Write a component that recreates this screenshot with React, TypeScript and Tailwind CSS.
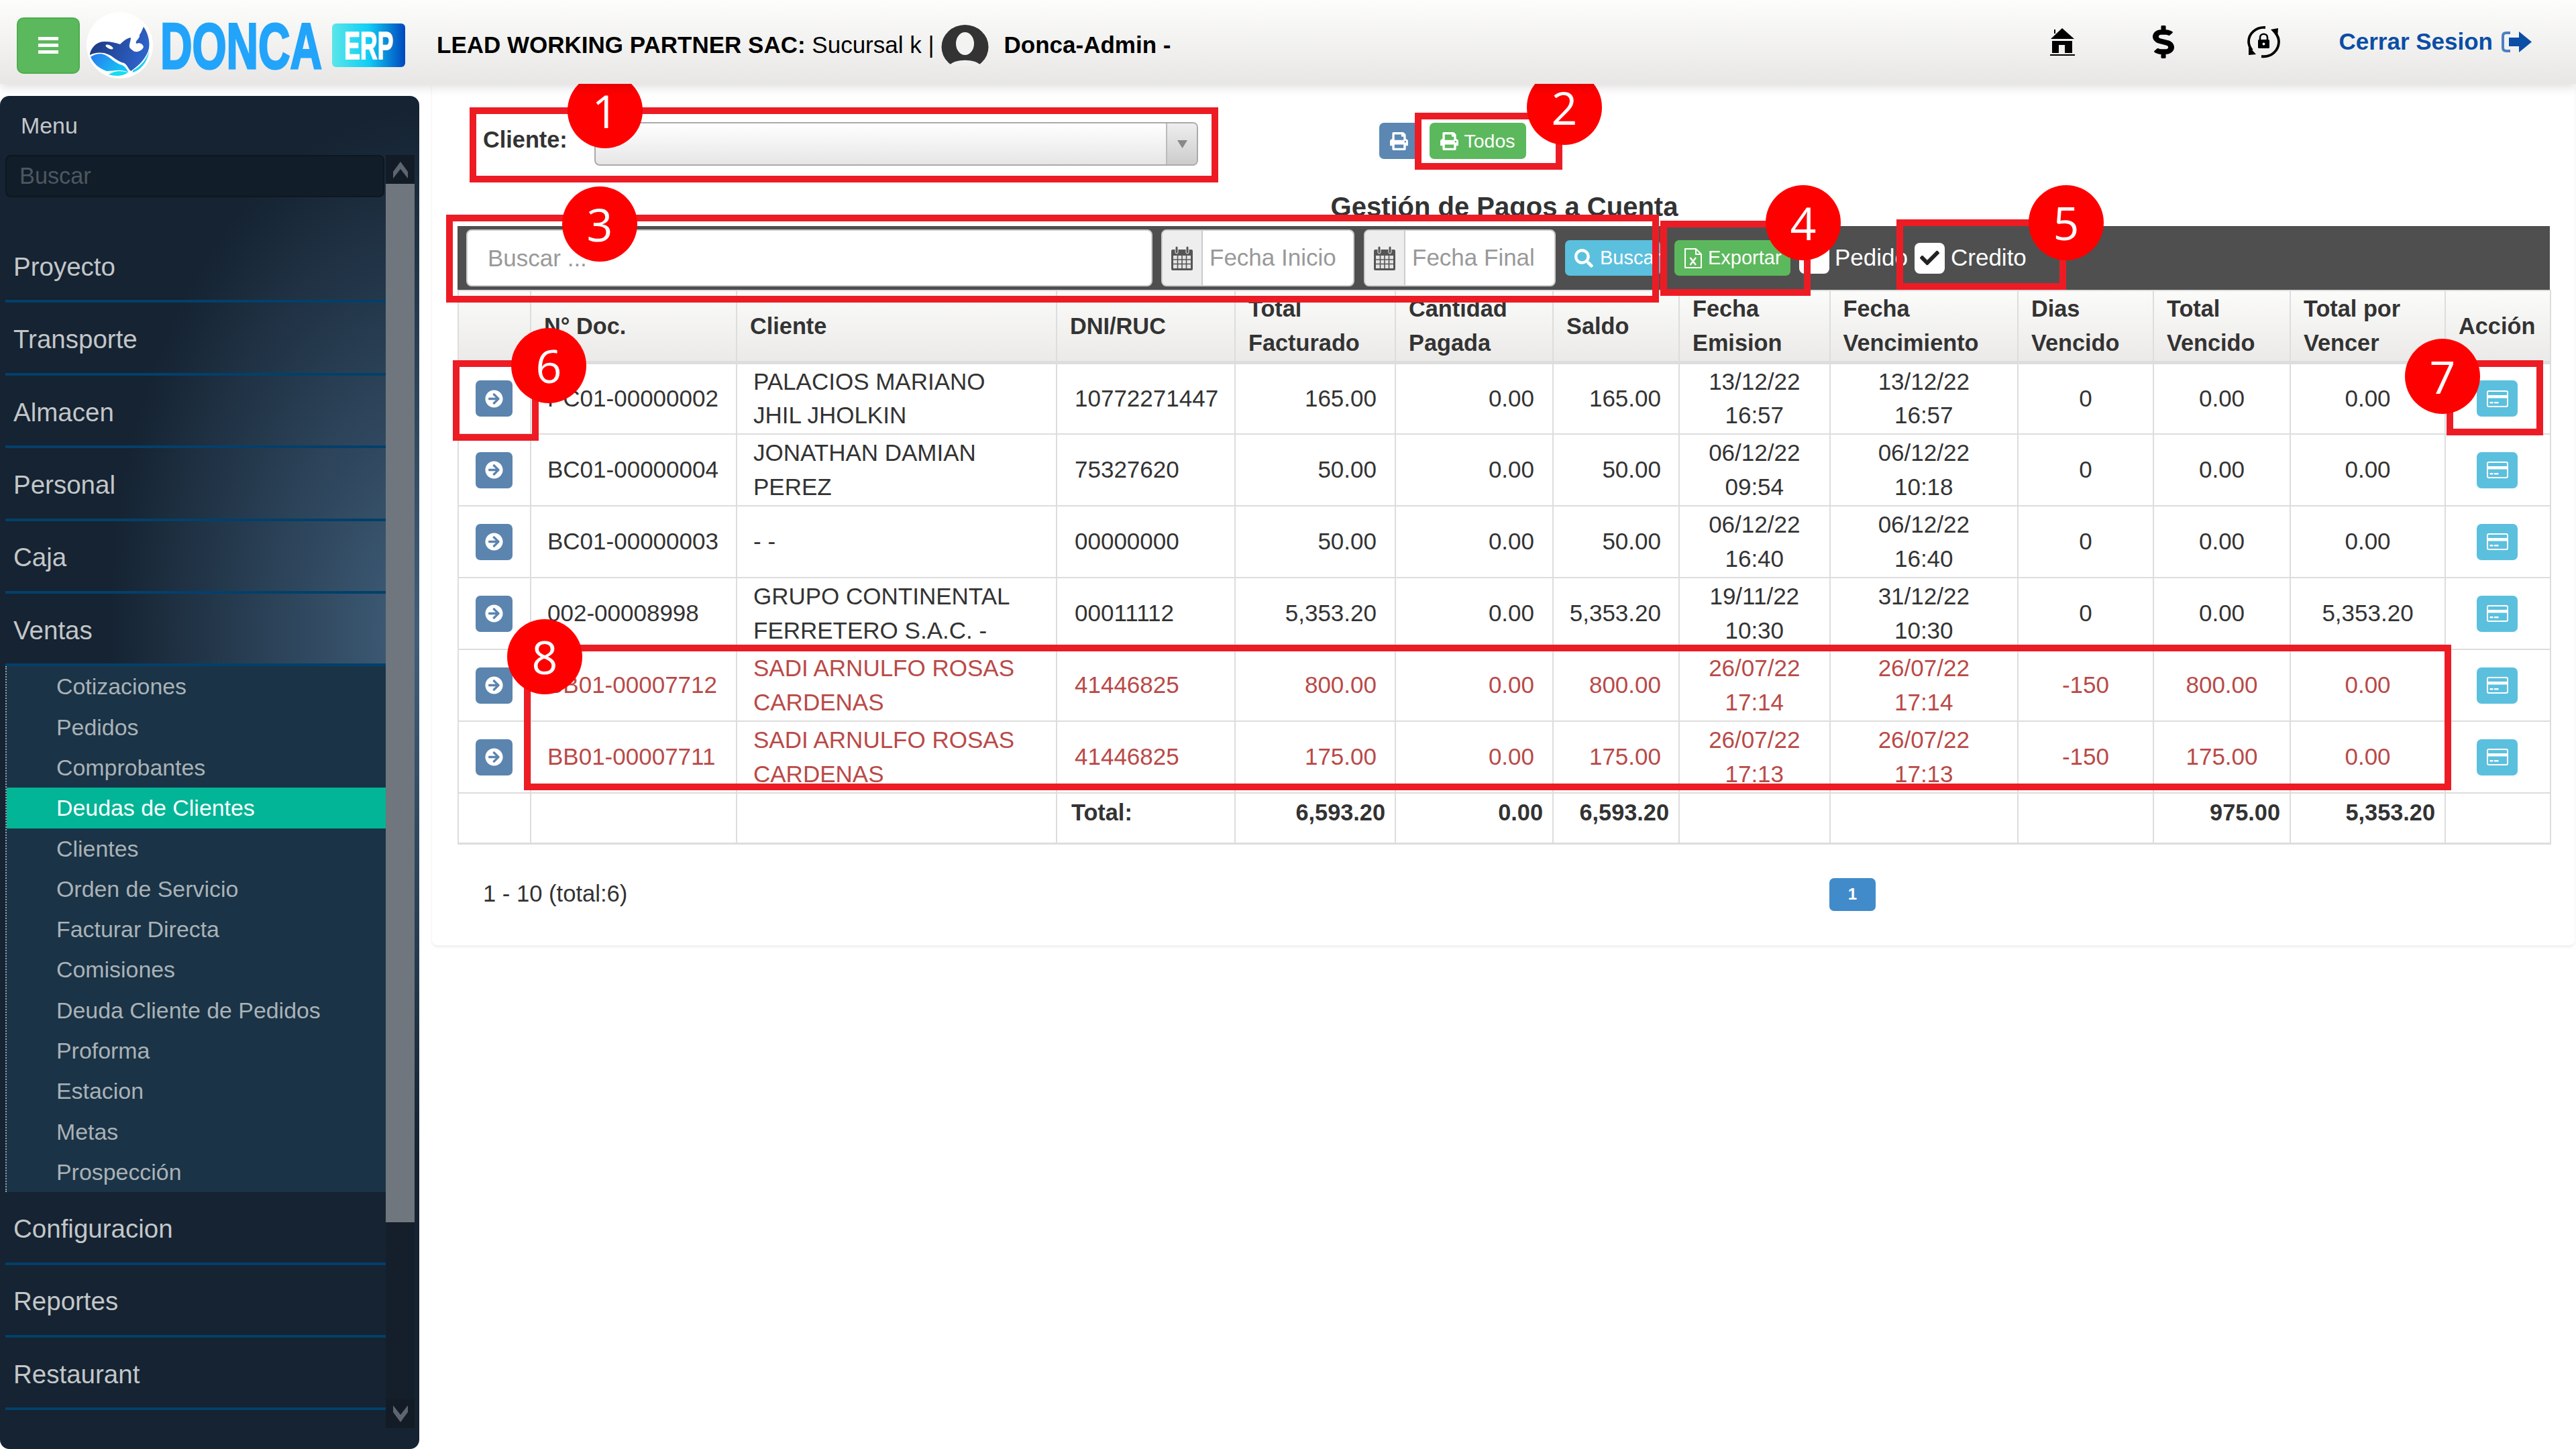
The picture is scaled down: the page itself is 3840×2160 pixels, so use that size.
import React from "react";
import { FaPrint, FaSearch, FaArrowCircleRight, FaCheck, FaDollarSign } from "react-icons/fa";

const menuTop = ["Proyecto", "Transporte", "Almacen", "Personal", "Caja", "Ventas"];
const menuBottom = ["Configuracion", "Reportes", "Restaurant"];
const subMenu = [
  "Cotizaciones",
  "Pedidos",
  "Comprobantes",
  "Deudas de Clientes",
  "Clientes",
  "Orden de Servicio",
  "Facturar Directa",
  "Comisiones",
  "Deuda Cliente de Pedidos",
  "Proforma",
  "Estacion",
  "Metas",
  "Prospección",
];

const rows = [
  { doc: "PC01-00000002", name: "PALACIOS MARIANO JHIL JHOLKIN", dni: "10772271447", fact: "165.00", pag: "0.00", saldo: "165.00", em: "13/12/22\n16:57", ven: "13/12/22\n16:57", dias: "0", tv: "0.00", tpv: "0.00" },
  { doc: "BC01-00000004", name: "JONATHAN DAMIAN PEREZ", dni: "75327620", fact: "50.00", pag: "0.00", saldo: "50.00", em: "06/12/22\n09:54", ven: "06/12/22\n10:18", dias: "0", tv: "0.00", tpv: "0.00" },
  { doc: "BC01-00000003", name: "- -", dni: "00000000", fact: "50.00", pag: "0.00", saldo: "50.00", em: "06/12/22\n16:40", ven: "06/12/22\n16:40", dias: "0", tv: "0.00", tpv: "0.00" },
  { doc: "002-00008998", name: "GRUPO CONTINENTAL FERRETERO S.A.C. -", dni: "00011112", fact: "5,353.20", pag: "0.00", saldo: "5,353.20", em: "19/11/22\n10:30", ven: "31/12/22\n10:30", dias: "0", tv: "0.00", tpv: "5,353.20" },
  { doc: "BB01-00007712", name: "SADI ARNULFO ROSAS CARDENAS", dni: "41446825", fact: "800.00", pag: "0.00", saldo: "800.00", em: "26/07/22\n17:14", ven: "26/07/22\n17:14", dias: "-150", tv: "800.00", tpv: "0.00", late: true },
  { doc: "BB01-00007711", name: "SADI ARNULFO ROSAS CARDENAS", dni: "41446825", fact: "175.00", pag: "0.00", saldo: "175.00", em: "26/07/22\n17:13", ven: "26/07/22\n17:13", dias: "-150", tv: "175.00", tpv: "0.00", late: true },
];

const headers = [
  "",
  "N° Doc.",
  "Cliente",
  "DNI/RUC",
  "Total\nFacturado",
  "Cantidad\nPagada",
  "Saldo",
  "Fecha\nEmision",
  "Fecha\nVencimiento",
  "Dias\nVencido",
  "Total\nVencido",
  "Total por\nVencer",
  "Acción",
];

const OrcaLogo = () => (
  <svg viewBox="0 0 99 99" className="w-[99px] h-[99px] shrink-0">
    <defs>
      <linearGradient id="orca" x1="0" y1="0" x2="1" y2="0.3">
        <stop offset="0" stopColor="#1b3478" />
        <stop offset="1" stopColor="#2d62c8" />
      </linearGradient>
      <linearGradient id="sea" x1="0" y1="0" x2="1" y2="0.4">
        <stop offset="0" stopColor="#2a78ee" />
        <stop offset="1" stopColor="#14c4f4" />
      </linearGradient>
    </defs>
    <ellipse cx="49.5" cy="49.5" rx="49.5" ry="49.5" fill="#fff" />
    <path d="M5 62 C8 50 18 43 28 44 C36 44 44 46 50 48 C55 43 60 39 66 38 C66 44 62 50 65 54 C69 58 76 58 81 52 C84 47 76 46 74 47 C72 42 80 40 79 34 C82 30 83 26 85 22 C91 30 95 44 93 54 C90 68 78 80 66 88 C62 84 60 78 56 76 C46 74 40 66 32 63 C24 59 12 60 5 64 Z" fill="url(#orca)" />
    <path d="M66 52 C66 47 72 46 74 48 C79 44 84 48 85 52 C83 58 74 61 70 58 C68 57 66 55 66 52 Z" fill="#fff" />
    <ellipse cx="34" cy="52" rx="6" ry="2.6" transform="rotate(25 34 52)" fill="#fff" />
    <path d="M6 67 C12 62 22 61 28 64 C36 68 42 76 53 79 C58 81 60 86 63 90 C52 84 40 88 30 88 C18 84 10 76 6 67 Z" fill="url(#sea)" />
    <path d="M69 87 C80 82 90 70 93 58 C92 72 82 86 69 90 Z" fill="#14d0f0" />
    <path d="M33 93 C42 87 52 87 62 90 C54 96 42 96 33 93 Z" fill="#18dcef" />
  </svg>
);

const HomeIcon = () => (
  <svg viewBox="0 0 37 41" className="w-[37px] h-[41px] shrink-0">
    <path d="M18 0 L36 16 H1 Z M6 2 H8 V8 H6 Z" fill="#000" />
    <path d="M3 19 H33 V37 H22 V25 H13 V37 H3 Z" fill="#000" />
    <rect x="0" y="39" width="37" height="2.4" fill="#000" />
  </svg>
);

const LockCycleIcon = () => (
  <svg viewBox="0 0 51 49" className="w-[51px] h-[49px] shrink-0">
    <path d="M28 3 C14 2 3 12 3 24 C3 29 5 33 8 37" fill="none" stroke="#000" strokeWidth="3.8" />
    <path d="M3 31 L14 43 L3 44 Z" fill="#000" />
    <path d="M22 46 C37 48 48 37 48 24 C48 19 46 15 43 11" fill="none" stroke="#000" strokeWidth="3.8" />
    <path d="M36 6 L47 4 L46 17 Z" fill="#000" />
    <path d="M20 22 V18 C20 11 31 11 31 18 V22" fill="none" stroke="#000" strokeWidth="2.6" />
    <rect x="17" y="21" width="17" height="13" rx="1.5" fill="#000" />
    <circle cx="25.5" cy="27.5" r="1.9" fill="#fff" />
  </svg>
);

const LogoutIcon = () => (
  <svg viewBox="0 0 46 33" className="w-[46px] h-[33px] shrink-0">
    <path d="M13 3 H7 Q2 3 2 8 V25 Q2 30 7 30 H13" fill="none" stroke="#4d80bf" strokeWidth="4" />
    <path d="M11 10 H26 V1 L45 16.5 L26 32 V23 H11 Z" fill="#0a4ea6" />
  </svg>
);

const AvatarIcon = () => (
  <svg viewBox="0 0 71 61" className="w-[71px] h-[61px] shrink-0">
    <ellipse cx="35.5" cy="33" rx="35" ry="33" fill="#333" />
    <ellipse cx="35.5" cy="28" rx="13.5" ry="17" fill="#f3f3f2" />
    <path d="M12 61 C18 50 53 50 59 61 Z" fill="#f0efee" />
  </svg>
);

const CalendarIcon = () => (
  <svg viewBox="0 0 32 36" className="w-[32px] h-[36px]">
    <path d="M2 5 H30 Q32 5 32 7 V34 Q32 36 30 36 H2 Q0 36 0 34 V7 Q0 5 2 5 Z" fill="#555" />
    <rect x="3" y="14" width="26" height="19" fill="#e4e4e4" />
    <path d="M3 20 H29 M3 26.500 H29 M9.500 14 V33 M16 14 V33 M22.500 14 V33" stroke="#555" strokeWidth="1.600" />
    <rect x="6" y="0" width="4" height="11" rx="2" fill="#555" stroke="#eee" strokeWidth="1" />
    <rect x="22" y="0" width="4" height="11" rx="2" fill="#555" stroke="#eee" strokeWidth="1" />
  </svg>
);

const ExcelIcon = () => (
  <svg viewBox="0 0 26 30" className="w-[26px] h-[30px] shrink-0">
    <path d="M1 1 H17 L25 9 V29 H1 Z M17 1 V9 H25" fill="none" stroke="#fff" strokeWidth="2" />
    <path d="M8.500 14 L17 25 M17 14 L8.500 25" stroke="#fff" strokeWidth="2.400" />
  </svg>
);

const CardIcon = () => (
  <svg viewBox="0 0 32 25" className="w-[32px] h-[25px]">
    <rect x="1" y="1" width="30" height="23" rx="2" fill="none" stroke="#fff" strokeWidth="2" />
    <rect x="1" y="7" width="30" height="4.500" fill="#fff" />
    <rect x="4.500" y="17" width="5" height="2.400" fill="#fff" />
    <rect x="11" y="17" width="6.500" height="2.400" fill="#fff" />
  </svg>
);

const Chevron = ({ up }: { up: boolean }) => (
  <svg viewBox="0 0 22 28" className="w-[22px] h-[28px]">
    <path d={up ? "M11 2 L22 17 V27 L11 13 L0 27 V17 Z" : "M11 26 L0 11 V1 L11 15 L22 1 V11 Z"} fill="#5d6670" />
  </svg>
);

const Header = () => (
  <header className="relative z-10 flex h-[125px] items-center pl-[25px] bg-gradient-to-b from-[#fdfdfc] to-[#e8e7e6] shadow-[0_5px_14px_rgba(0,0,0,0.13)]">
    <div className="flex items-center mt-[10px]">
      <button className="flex h-[84px] w-[94px] flex-col items-center justify-center gap-[5px] rounded-[10px] border-2 border-[#4cae4c] bg-[#5cb85c]">
        <span className="h-[5px] w-[30px] bg-white" />
        <span className="h-[5px] w-[30px] bg-white" />
        <span className="h-[5px] w-[30px] bg-white" />
      </button>
      <div className="ml-[10px]">
        <OrcaLogo />
      </div>
      <svg viewBox="0 0 242 72" className="ml-[11px] w-[242px] h-[72px] overflow-visible">
        <text transform="translate(0 70) scale(0.685 1)" fontSize="96" fontWeight="700" fontFamily="Liberation Sans, Arial, sans-serif" fill="#22a4fb" stroke="#22a4fb" strokeWidth="3">
          DONCA
        </text>
      </svg>
      <svg viewBox="0 0 109 65" className="ml-[14px] w-[109px] h-[65px] overflow-visible">
        <defs>
          <linearGradient id="erp" x1="0" y1="0" x2="1" y2="0">
            <stop offset="0" stopColor="#5be6e8" />
            <stop offset="0.5" stopColor="#11cdf6" />
            <stop offset="1" stopColor="#0047bd" />
          </linearGradient>
        </defs>
        <rect width="109" height="65" rx="6" fill="url(#erp)" />
        <text transform="translate(18 53) scale(0.624 1)" fontSize="57" fontWeight="700" fontFamily="Liberation Sans, Arial, sans-serif" fill="#fff" stroke="#fff" strokeWidth="1.5">
          ERP
        </text>
      </svg>
      <div className="ml-[47px] flex items-center text-[35px] text-black">
        <span>
          <b>LEAD WORKING PARTNER SAC:</b> Sucursal k |
        </span>
        <span className="ml-[10px]">
          <AvatarIcon />
        </span>
        <b className="ml-[23px]">Donca-Admin -</b>
      </div>
    </div>
    <div className="ml-auto flex items-center pr-[65px]">
      <HomeIcon />
      <FaDollarSign className="ml-[116px] w-[32px] h-[49px] text-black" preserveAspectRatio="none" />
      <span className="ml-[108px]">
        <LockCycleIcon />
      </span>
      <b className="ml-[86px] text-[35px] text-[#0a4ea6]">Cerrar Sesion</b>
      <span className="ml-[13px]">
        <LogoutIcon />
      </span>
    </div>
  </header>
);

const MenuItem = ({ label }: { label: string }) => (
  <div className="flex h-[108.4px] items-center border-b-[4px] border-[#03406b] pl-[12px] pt-[5px] text-[38.5px] text-[#c3c6c8]">{label}</div>
);

const Sidebar = () => (
  <aside className="mt-[18px] w-[625px] shrink-0 rounded-[14px] bg-[#152332] bg-[radial-gradient(ellipse_480px_780px_at_640px_800px,#41607c,#152332)] text-[33.9px]">
    <div className="h-[88px] pl-[31px] leading-[88px] text-[#c5c7c8]">Menu</div>
    <div className="flex">
      <div className="ml-[8px] w-[567px]">
        <input
          readOnly
          placeholder="Buscar"
          className="h-[63px] w-[565px] rounded-[8px] border-2 border-[#0e1720] bg-[#111d28] pl-[19px] text-[34.3px] outline-none placeholder:text-[#4c5762]"
        />
        <div className="mt-[49px]">
          {menuTop.map((m) => (
            <MenuItem key={m} label={m} />
          ))}
          <div className="border-l-2 border-dotted border-[#9aa3a9] bg-[#1a3346]">
            {subMenu.map((s) => (
              <div
                key={s}
                className={
                  s === "Deudas de Clientes"
                    ? "h-[60.3px] bg-[#02b596] pl-[74px] leading-[60.3px] text-white"
                    : "h-[60.3px] pl-[74px] leading-[60.3px] text-[#aab2b7]"
                }
              >
                {s}
              </div>
            ))}
          </div>
          {menuBottom.map((m) => (
            <MenuItem key={m} label={m} />
          ))}
        </div>
      </div>
      <div className="flex h-[1898px] w-[43px] flex-col justify-between bg-[#141f2b]">
        <div>
          <div className="flex h-[43px] items-center justify-center bg-[#131c26]">
            <Chevron up />
          </div>
          <div className="h-[1548px] bg-[#6f767e]" />
        </div>
        <div className="flex h-[43px] items-center justify-center bg-[#131c26]">
          <Chevron up={false} />
        </div>
      </div>
    </div>
  </aside>
);

const DateBox = ({ label, wide }: { label: string; wide?: boolean }) => (
  <div className={wide ? "ml-[13px] flex h-[85px] w-[288px] overflow-hidden rounded-[8px] border-2 border-[#ccc] bg-white" : "ml-[14px] flex h-[85px] w-[286px] overflow-hidden rounded-[8px] border-2 border-[#ccc] bg-white"}>
    <span className="flex w-[60px] shrink-0 items-center justify-center border-r-2 border-[#ccc] bg-[#eee]">
      <CalendarIcon />
    </span>
    <span className="ml-[10px] self-center whitespace-nowrap text-[35px] text-[#999]">{label}</span>
  </div>
);

const Toolbar = () => (
  <div className="flex h-[95px] w-[3119px] items-center bg-[#4f4f4f] pl-[13px]">
    <input
      readOnly
      placeholder="Buscar ..."
      className="h-[85px] w-[1023px] rounded-[8px] border-2 border-[#ccc] bg-white pl-[30px] text-[35px] outline-none placeholder:text-[#999]"
    />
    <DateBox label="Fecha Inicio" wide />
    <DateBox label="Fecha Final" />
    <button className="ml-[14px] flex h-[53px] w-[142px] items-center overflow-hidden rounded-[7px] bg-[#5bc0de] pl-[14px] text-[29px] whitespace-nowrap text-white">
      <FaSearch className="w-[28px] h-[28px] shrink-0" />
      <span className="ml-[10px]">Buscar</span>
    </button>
    <button className="ml-[21px] flex h-[53px] w-[173px] items-center rounded-[7px] bg-[#5cb85c] pl-[15px] text-[29px] text-white">
      <ExcelIcon />
      <span className="ml-[9px]">Exportar</span>
    </button>
    <span className="ml-[13px] h-[46px] w-[45px] rounded-[8px] bg-white" />
    <span className="ml-[8px] w-[119px] text-[35px] text-white">Pedido</span>
    <span className="flex h-[46px] w-[45px] items-center justify-center rounded-[8px] bg-white text-[#222]">
      <FaCheck className="w-[29px] h-[29px]" />
    </span>
    <span className="ml-[9px] text-[35px] text-white">Credito</span>
  </div>
);

const DebtTable = () => (
  <table className="w-[3119px] table-fixed border-collapse text-[35px] leading-[50.5px] text-[#333]">
    <colgroup>
      <col className="w-[108px]" />
      <col className="w-[307px]" />
      <col className="w-[477px]" />
      <col className="w-[266px]" />
      <col className="w-[239px]" />
      <col className="w-[235px]" />
      <col className="w-[188px]" />
      <col className="w-[224.500px]" />
      <col className="w-[280.500px]" />
      <col className="w-[202px]" />
      <col className="w-[204px]" />
      <col className="w-[231px]" />
      <col className="w-[157px]" />
    </colgroup>
    <thead>
      <tr className="h-[107px]">
        {headers.map((h, i) => (
          <th
            key={i}
            className="overflow-hidden border-2 border-b-[5px] border-[#ddd] bg-gradient-to-b from-[#fbfbf9] to-[#ebeae8] pl-[19px] text-left text-[34.3px] font-bold whitespace-pre-line"
          >
            {h}
          </th>
        ))}
      </tr>
    </thead>
    <tbody>
      {rows.map((r) => (
        <tr key={r.doc} className={r.late ? "h-[107px] text-[#b94a48]" : "h-[107px]"}>
          <td className="border-2 border-[#ddd] pr-[2px] text-center">
            <button className="mx-auto flex h-[54px] w-[55px] items-center justify-center rounded-[7px] bg-[#5b84ae] text-white">
              <FaArrowCircleRight className="w-[27px] h-[27px]" />
            </button>
          </td>
          <td className="border-2 border-[#ddd] pl-[24px]">{r.doc}</td>
          <td className="border-2 border-[#ddd] pl-[24px] pr-[40px]">{r.name}</td>
          <td className="border-2 border-[#ddd] pl-[26px]">{r.dni}</td>
          <td className="border-2 border-[#ddd] pr-[27px] text-right">{r.fact}</td>
          <td className="border-2 border-[#ddd] pr-[27px] text-right">{r.pag}</td>
          <td className="border-2 border-[#ddd] pr-[26px] text-right">{r.saldo}</td>
          <td className="border-2 border-[#ddd] text-center whitespace-pre-line">{r.em}</td>
          <td className="border-2 border-[#ddd] text-center whitespace-pre-line">{r.ven}</td>
          <td className="border-2 border-[#ddd] text-center">{r.dias}</td>
          <td className="border-2 border-[#ddd] text-center">{r.tv}</td>
          <td className="border-2 border-[#ddd] text-center">{r.tpv}</td>
          <td className="border-2 border-[#ddd] pr-[2px] text-center">
            <button className="mx-auto flex h-[54px] w-[61px] items-center justify-center rounded-[7px] bg-[#5bc0de]">
              <CardIcon />
            </button>
          </td>
        </tr>
      ))}
      <tr className="h-[75px] align-top text-[34.3px] font-bold">
        <td className="border-2 border-b-[3px] border-[#ddd]" />
        <td className="border-2 border-b-[3px] border-[#ddd]" />
        <td className="border-2 border-b-[3px] border-[#ddd]" />
        <td className="border-2 border-b-[3px] border-[#ddd] pl-[21px] pt-[3px]">Total:</td>
        <td className="border-2 border-b-[3px] border-[#ddd] pr-[14px] pt-[3px] text-right">6,593.20</td>
        <td className="border-2 border-b-[3px] border-[#ddd] pr-[14px] pt-[3px] text-right">0.00</td>
        <td className="border-2 border-b-[3px] border-[#ddd] pr-[14px] pt-[3px] text-right">6,593.20</td>
        <td className="border-2 border-b-[3px] border-[#ddd]" />
        <td className="border-2 border-b-[3px] border-[#ddd]" />
        <td className="border-2 border-b-[3px] border-[#ddd]" />
        <td className="border-2 border-b-[3px] border-[#ddd] pr-[14px] pt-[3px] text-right">975.00</td>
        <td className="border-2 border-b-[3px] border-[#ddd] pr-[14px] pt-[3px] text-right">5,353.20</td>
        <td className="border-2 border-b-[3px] border-[#ddd]" />
      </tr>
    </tbody>
  </table>
);

const MainPanel = () => (
  <main className="ml-[19px] mr-[4px] h-fit flex-1 rounded-b-[8px] pl-[38px] pr-[35px] pt-[57px] pb-[51px] shadow-[0_3px_4px_rgba(0,0,0,0.07)]">
    <div className="flex items-start">
      <b className="w-[204px] pl-[38px] text-[34.3px] leading-[52px] text-[#333]">Cliente:</b>
      <div className="flex h-[65px] w-[900px] overflow-hidden rounded-[8px] border-2 border-[#aaa] bg-gradient-to-b from-white to-[#e6e6e6]">
        <span className="flex-1" />
        <span className="flex w-[46px] items-center justify-center border-l-2 border-[#bbb] bg-gradient-to-b from-[#eee] to-[#ccc]">
          <svg viewBox="0 0 15 12" className="w-[15px] h-[12px]">
            <path d="M0 0 H15 L7.500 12 Z" fill="#888" />
          </svg>
        </span>
      </div>
      <button className="ml-[270px] mt-[1px] flex h-[54px] w-[59px] items-center justify-center rounded-[7px] bg-[#5b87b2] text-white">
        <FaPrint className="w-[27px] h-[27px]" />
      </button>
      <button className="ml-[16px] mt-[1px] flex h-[54px] w-[144px] items-center justify-center rounded-[7px] bg-[#5cb85c] text-[28.500px] text-white">
        <FaPrint className="w-[27px] h-[27px]" />
        <span className="ml-[8px]">Todos</span>
      </button>
    </div>
    <h2 className="mt-[36px] h-[54px] text-center text-[40px] leading-[50px] font-bold text-[#333]">Gestión de Pagos a Cuenta</h2>
    <Toolbar />
    <DebtTable />
    <div className="mt-[50px] flex h-[49px] items-center text-[34.6px] text-[#333]">
      <span className="w-[2045px] pl-[38px]">1 - 10 (total:6)</span>
      <span className="flex h-[49px] w-[69px] items-center justify-center rounded-[7px] bg-[#428bca] text-[24px] font-bold text-white">1</span>
    </div>
  </main>
);

// callouts pasted on top of the screenshot
const boxClass = "absolute border-[10px] border-[#ed1c24]";
const dotClass =
  "absolute flex h-[112px] w-[112px] items-center justify-center rounded-full bg-[#ff0000] font-['Open_Sans',sans-serif] text-[68px] leading-none text-white";

const Callouts = () => (
  <>
    <div className={`${boxClass} left-[700px] top-[160px] h-[112px] w-[1116px]`} />
    <div className={`${boxClass} left-[2109px] top-[168px] h-[85px] w-[220px]`} />
    <div className={`${boxClass} left-[665px] top-[320px] h-[131px] w-[1808px]`} />
    <div className={`${boxClass} left-[2475px] top-[329px] h-[112px] w-[224px]`} />
    <div className={`${boxClass} left-[2827px] top-[327px] h-[105px] w-[253px]`} />
    <div className={`${boxClass} left-[675px] top-[537px] h-[120px] w-[128px]`} />
    <div className={`${boxClass} left-[3647px] top-[537px] h-[112px] w-[144px]`} />
    <div className={`${boxClass} left-[781px] top-[961px] h-[217px] w-[2873px]`} />
    <div className={`${dotClass} left-[846px] top-[109px]`}>1</div>
    <div className={`${dotClass} left-[2276px] top-[104px]`}>2</div>
    <div className={`${dotClass} left-[838px] top-[278px]`}>3</div>
    <div className={`${dotClass} left-[2632px] top-[276px]`}>4</div>
    <div className={`${dotClass} left-[3024px] top-[276px]`}>5</div>
    <div className={`${dotClass} left-[762px] top-[489px]`}>6</div>
    <div className={`${dotClass} left-[3585px] top-[505px]`}>7</div>
    <div className={`${dotClass} left-[756px] top-[923px]`}>8</div>
  </>
);

export default function App() {
  return (
    <div className="relative flex h-[2160px] w-[3840px] flex-col overflow-hidden bg-white font-['Liberation_Sans',Arial,sans-serif]">
      <Header />
      <div className="flex flex-1">
        <Sidebar />
        <MainPanel />
      </div>
      <Callouts />
    </div>
  );
}
